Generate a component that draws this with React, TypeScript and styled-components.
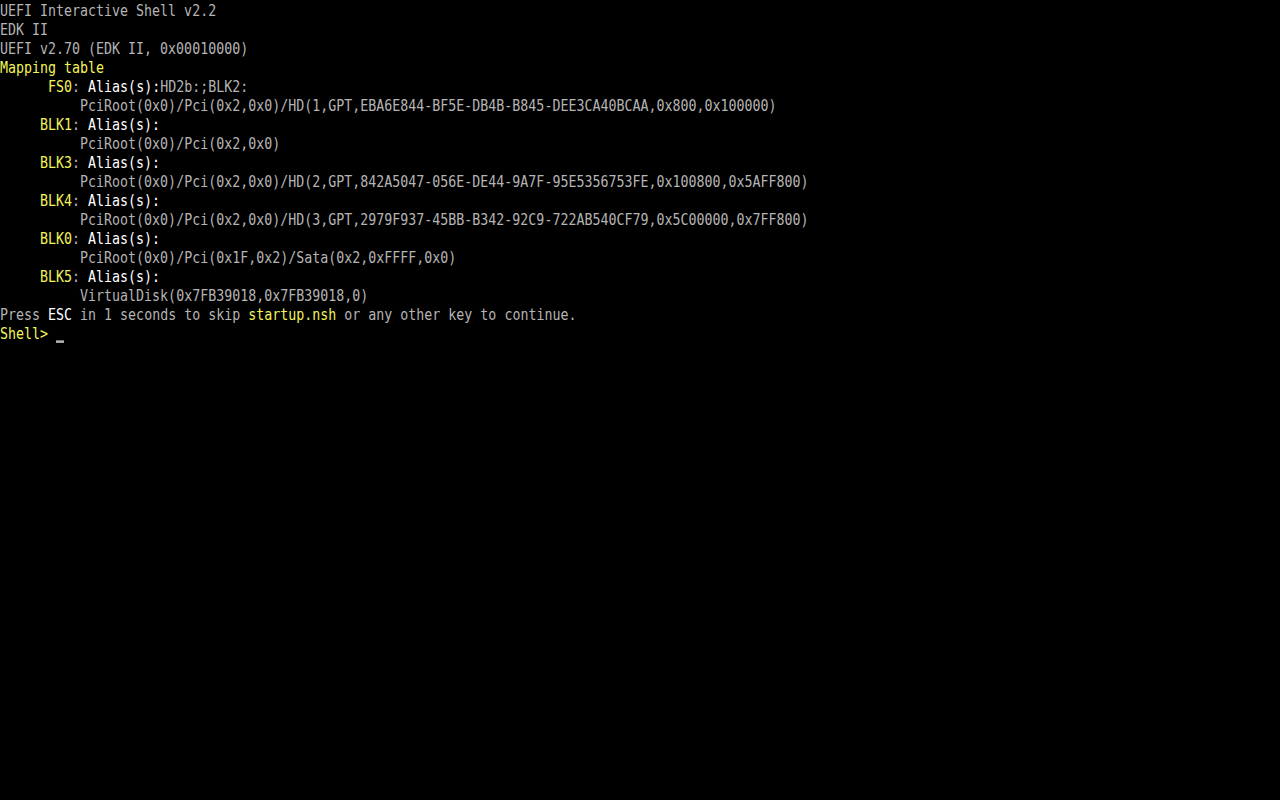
import styled, { createGlobalStyle } from 'styled-components';

const GlobalStyle = createGlobalStyle`
  html, body {
    margin: 0;
    padding: 0;
    background: #000;
  }
`;

const Screen = styled.div`
  width: 1280px;
  height: 800px;
  padding-top: 1px;
  box-sizing: border-box;
  background: #000;
  overflow: hidden;
  font-family: "DejaVu Sans Mono", "Liberation Mono", monospace;
  font-size: 13.3px;
  color: #b4b4b4;
`;

const Line = styled.div`
  height: 19px;
  line-height: 19px;
  white-space: pre;
  transform: scaleY(1.25);
  transform-origin: center;
`;

type Tone = 'gray' | 'white' | 'yellow';

const colors: Record<Tone, string> = {
  gray: '#b4b4b4',
  white: '#ffffff',
  yellow: '#f4f458',
};

const Txt = styled.span<{ $tone?: Tone }>`
  color: ${(p) => colors[p.$tone ?? 'gray']};
`;

const Cursor = styled.span`
  display: inline-block;
  width: 8px;
  height: 2px;
  background: #b4b4b4;
  vertical-align: -3px;
`;

const mappings = [
  { name: 'FS0', alias: 'HD2b:;BLK2:', path: 'PciRoot(0x0)/Pci(0x2,0x0)/HD(1,GPT,EBA6E844-BF5E-DB4B-B845-DEE3CA40BCAA,0x800,0x100000)' },
  { name: 'BLK1', alias: '', path: 'PciRoot(0x0)/Pci(0x2,0x0)' },
  { name: 'BLK3', alias: '', path: 'PciRoot(0x0)/Pci(0x2,0x0)/HD(2,GPT,842A5047-056E-DE44-9A7F-95E5356753FE,0x100800,0x5AFF800)' },
  { name: 'BLK4', alias: '', path: 'PciRoot(0x0)/Pci(0x2,0x0)/HD(3,GPT,2979F937-45BB-B342-92C9-722AB540CF79,0x5C00000,0x7FF800)' },
  { name: 'BLK0', alias: '', path: 'PciRoot(0x0)/Pci(0x1F,0x2)/Sata(0x2,0xFFFF,0x0)' },
  { name: 'BLK5', alias: '', path: 'VirtualDisk(0x7FB39018,0x7FB39018,0)' },
];

function App() {
  return (
    <>
      <GlobalStyle />
      <Screen>
        <Line>UEFI Interactive Shell v2.2</Line>
        <Line>EDK II</Line>
        <Line>UEFI v2.70 (EDK II, 0x00010000)</Line>
        <Line><Txt $tone="yellow">Mapping table</Txt></Line>
        {mappings.map((m) => (
          <div key={m.name}>
            <Line>
              {' '.repeat(9 - m.name.length)}
              <Txt $tone="yellow">{m.name}</Txt>: <Txt $tone="white">Alias(s):</Txt>
              {m.alias}
            </Line>
            <Line>{'          '}{m.path}</Line>
          </div>
        ))}
        <Line>
          Press <Txt $tone="white">ESC</Txt> in 1 seconds to skip <Txt $tone="yellow">startup.nsh</Txt> or any other key to continue.
        </Line>
        <Line>
          <Txt $tone="yellow">Shell&gt;</Txt> <Cursor />
        </Line>
      </Screen>
    </>
  );
}

export default App;
